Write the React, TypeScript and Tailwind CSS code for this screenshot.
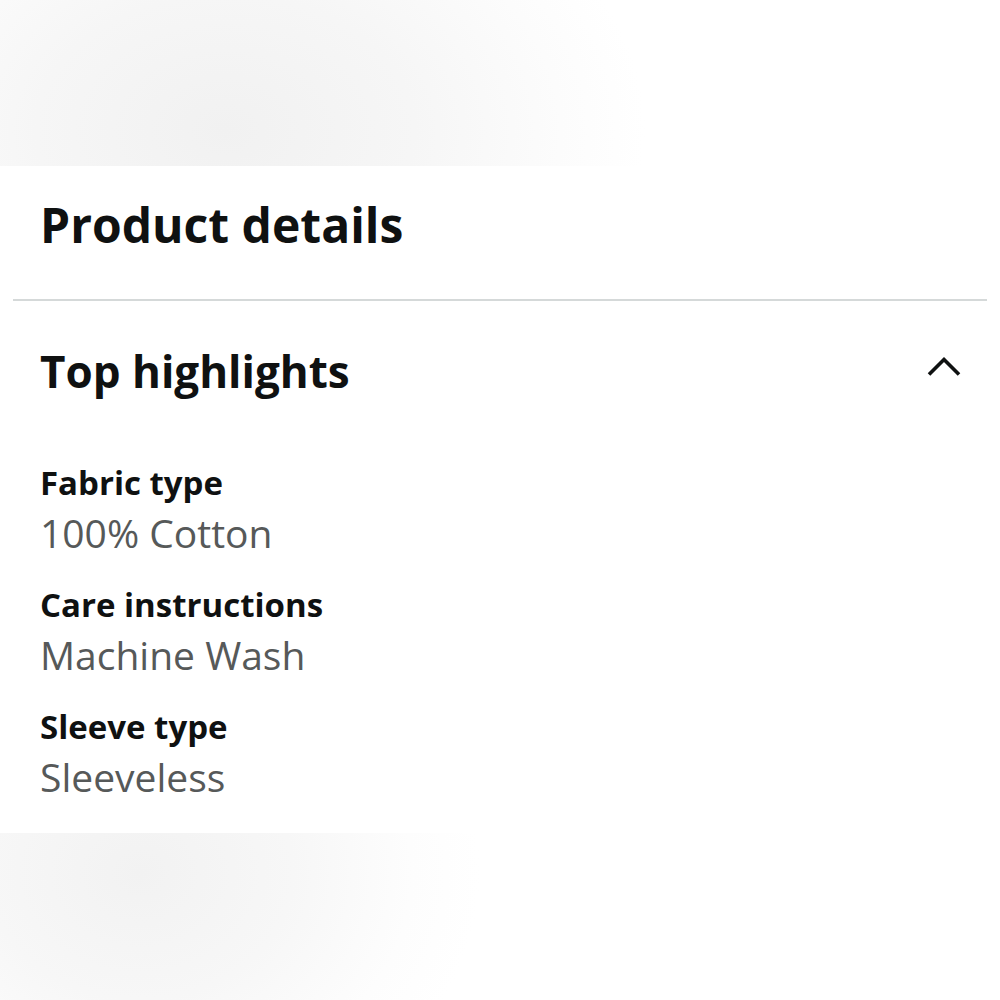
import React from "react";

const font = { fontFamily: '"Open Sans", "Noto Sans", Arial, sans-serif' };

function Item({ label, value }: { label: string; value: string }) {
  return (
    <div className="flex flex-col">
      <div className="text-[33px] leading-[44px] font-bold text-[#0f1111]">{label}</div>
      <div className="mt-[3px] text-[39px] leading-[50px] text-[#565959]">{value}</div>
    </div>
  );
}

export default function App() {
  return (
    <div className="w-[1000px] h-[1000px] bg-white flex flex-col overflow-hidden" style={font}>
      <div className="h-[166px] w-full bg-[radial-gradient(ellipse_420px_300px_at_225px_130px,#f1f1f1_0%,#f6f6f6_45%,#fcfcfc_80%,#ffffff_100%)]" />
      <div className="h-[667px] bg-white flex flex-col">
        <div className="px-[40px] pt-[29px] h-[133px]">
          <h1 className="text-[48px] leading-[60px] font-bold text-[#0f1111]">Product details</h1>
        </div>
        <div className="mx-[13px] h-[2px] bg-[#d5d9d9]" />
        <div className="px-[40px] pt-[40px] flex items-center justify-between">
          <h2 className="text-[44px] leading-[60px] font-bold text-[#0f1111]">Top highlights</h2>
          <svg width="36" height="24" viewBox="0 0 36 24" className="mr-[-2px] mb-[8px]">
            <path d="M3 19.5 L18 4.5 L33 19.5" fill="none" stroke="#0f1111" strokeWidth="3.6" />
          </svg>
        </div>
        <div className="px-[40px] pt-[60px] flex flex-col gap-[25px]">
          <Item label="Fabric type" value="100% Cotton" />
          <Item label="Care instructions" value="Machine Wash" />
          <Item label="Sleeve type" value="Sleeveless" />
        </div>
      </div>
      <div className="flex-1 w-full bg-[radial-gradient(ellipse_340px_280px_at_140px_40px,#f2f2f2_0%,#f7f7f7_45%,#fdfdfd_80%,#ffffff_100%)]" />
    </div>
  );
}
